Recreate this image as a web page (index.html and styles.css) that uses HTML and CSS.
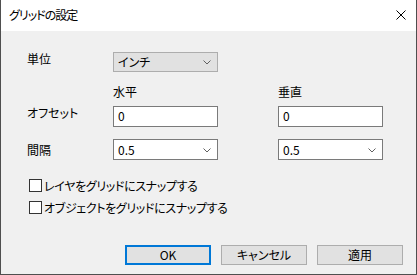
FILE: index.html
```html
<!doctype html>
<html>
<head>
<meta charset="utf-8">
<title>グリッドの設定</title>
<link rel="stylesheet" href="styles.css">
</head>
<body>
<div class="dialog">
	<div class="titlebar">
		<span class="title">グリッドの設定</span>
		<svg class="close" width="10" height="10" viewBox="0 0 10 10"><path d="M0.5 0.5L9.5 9.5M9.5 0.5L0.5 9.5" stroke="#000" stroke-width="1" fill="none"/></svg>
	</div>
	<div class="content">
		<div class="form">
			<div class="label up">単位</div>
			<div class="select grey">
				<span>インチ</span>
				<svg class="arrow" width="8" height="5" viewBox="0 0 8 5"><path d="M0.5 0.5L4 4L7.5 0.5" stroke="#606060" fill="none"/></svg>
			</div>
			<div></div>
			<div></div>

			<div></div>
			<div class="head">水平</div>
			<div></div>
			<div class="head">垂直</div>

			<div class="label up">オフセット</div>
			<div class="input">0</div>
			<div></div>
			<div class="input">0</div>

			<div class="label">間隔</div>
			<div class="select">
				<span>0.5</span>
				<svg class="arrow" width="8" height="5" viewBox="0 0 8 5"><path d="M0.5 0.5L4 4L7.5 0.5" stroke="#606060" fill="none"/></svg>
			</div>
			<div></div>
			<div class="select">
				<span>0.5</span>
				<svg class="arrow" width="8" height="5" viewBox="0 0 8 5"><path d="M0.5 0.5L4 4L7.5 0.5" stroke="#606060" fill="none"/></svg>
			</div>
		</div>

		<div class="checks">
			<label class="check"><span class="box"></span>レイヤをグリッドにスナップする</label>
			<label class="check"><span class="box"></span>オブジェクトをグリッドにスナップする</label>
		</div>

		<div class="buttons">
			<div class="btn default">OK</div>
			<div class="btn">キャンセル</div>
			<div class="btn">適用</div>
		</div>
	</div>
</div>
</body>
</html>
```

FILE: styles.css
```css
* { margin: 0; padding: 0; box-sizing: border-box; }
body {
	font-family: "Noto Sans CJK JP", "Noto Sans", sans-serif;
	font-feature-settings: "palt";
	font-size: 12px;
	color: #000;
	background: #fff;
}
.dialog {
	width: 417px;
	height: 275px;
	border: 1px solid #4f4f4f;
	border-top: none;
	background: #f0f0f0;
	display: flex;
	flex-direction: column;
}
.titlebar {
	height: 31px;
	background: #fff;
	display: flex;
	align-items: center;
	justify-content: space-between;
	padding: 0 10px 1px 8px;
}
.title { font-size: 12px; line-height: 16px; letter-spacing: -1px; }
.close { display: block; }

.content {
	flex: 1;
	padding: 21px 13px 0 26px;
	display: flex;
	flex-direction: column;
}
/*-----------------------------------------------*/
.form {
	display: grid;
	grid-template-columns: 86px 105px 60px 105px;
	grid-template-rows: 21px 33px 33px 21px;
}
.label {
	line-height: 16px;
	align-self: center;
}
.label.up { align-self: start; margin-top: -1px; }
.head {
	align-self: end;
	line-height: 16px;
	padding-bottom: 6px;
}
.input, .select {
	height: 21px;
	border: 1px solid #7a7a7a;
	background: #fff;
	line-height: 18px;
	padding-left: 4px;
	align-self: start;
}
.select {
	display: flex;
	align-items: center;
	justify-content: space-between;
	padding-right: 6px;
}
.select.grey {
	height: 20px;
	background: #e1e1e1;
	border-color: #adadad;
}
.arrow { display: block; margin-top: 1px; }

.checks {
	margin-top: 19px;
	padding-left: 2px;
	display: flex;
	flex-direction: column;
	gap: 9px;
}
.check {
	display: flex;
	align-items: center;
	height: 13px;
	line-height: 16px;
	letter-spacing: -0.35px;
}
.box {
	width: 13px;
	height: 13px;
	border: 1px solid #333;
	background: #fff;
	margin-right: 2px;
	flex: none;
}

.buttons {
	margin-top: 31px;
	display: flex;
	justify-content: flex-end;
	gap: 10px;
}
.btn {
	width: 86px;
	height: 20px;
	background: #e1e1e1;
	border: 1px solid #adadad;
	text-align: center;
	line-height: 18px;
}
.btn.default {
	border: 2px solid #0078d7;
	line-height: 16px;
}
```
